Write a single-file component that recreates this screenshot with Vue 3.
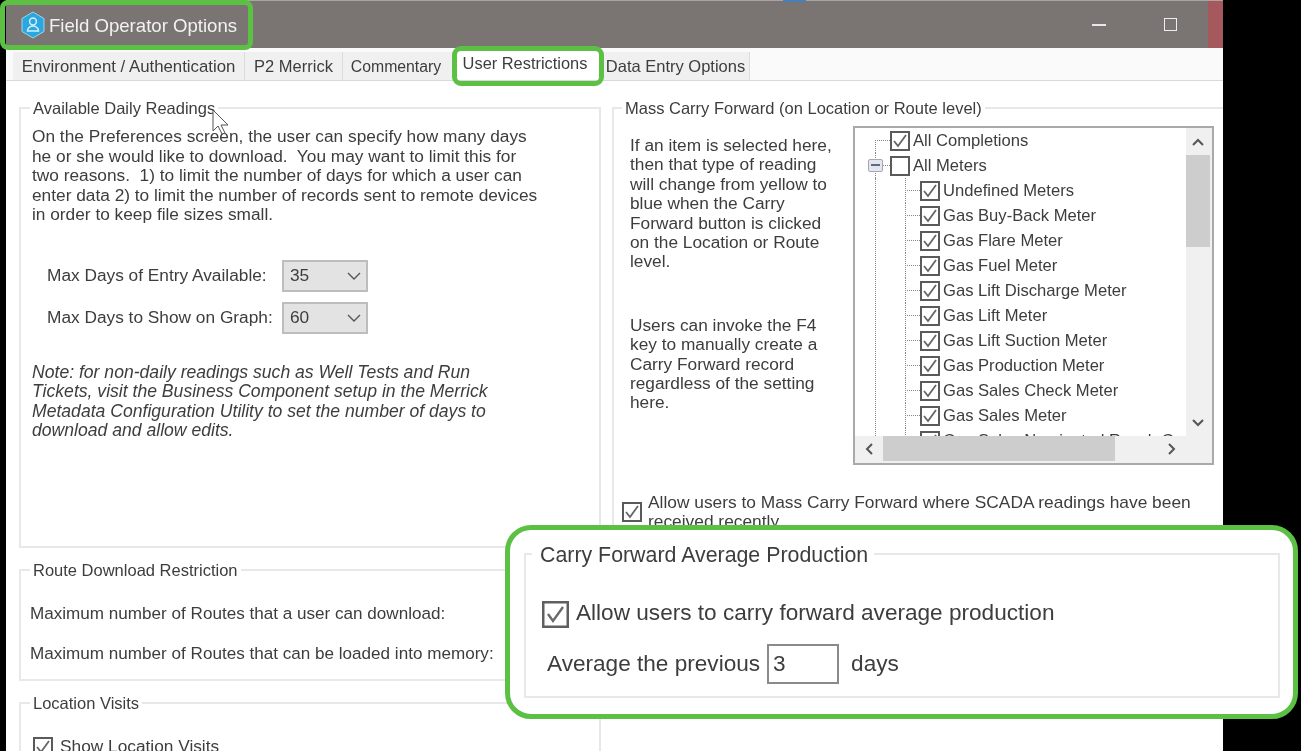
<script setup>
const meters = ['Undefined Meters','Gas Buy-Back Meter','Gas Flare Meter','Gas Fuel Meter','Gas Lift Discharge Meter','Gas Lift Meter','Gas Lift Suction Meter','Gas Production Meter','Gas Sales Check Meter','Gas Sales Meter','Gas Sales Nominated Ranch Gas']
</script>

<template>
  <div class="page">
    <div class="window">
      <header class="titlebar">
        <svg class="appicon" width="26" height="28" viewBox="0 0 26 28">
          <path d="M13 1 L24 7.5 V20.5 L13 27 L2 20.5 V7.5 Z" fill="#2aa7df" stroke="#9fd4ec" stroke-width="1"/>
          <circle cx="13" cy="10.5" r="3.4" fill="none" stroke="#d5eefa" stroke-width="1.5"/>
          <path d="M7.5 20 a5.5 5 0 0 1 11 0 Z" fill="none" stroke="#d5eefa" stroke-width="1.5"/>
        </svg>
        <span class="title">Field Operator Options</span>
        <span class="spacer"></span>
        <span class="minimize"></span>
        <span class="maximize"></span>
        <span class="close"></span>
      </header>

      <nav class="tabs">
        <span class="tab t1">Environment / Authentication</span>
        <span class="tab t2">P2 Merrick</span>
        <span class="tab t3">Commentary</span>
        <span class="tab active">User Restrictions</span>
        <span class="tab t5">Data Entry Options</span>
      </nav>

      <main class="content">
        <div class="col-left">
          <section class="group readings">
            <div class="legend">Available Daily Readings</div>
            <p class="intro">On the Preferences screen, the user can specify how many days<br>he or she would like to download.&nbsp; You may want to limit this for<br>two reasons.&nbsp; 1) to limit the number of days for which a user can<br>enter data 2) to limit the number of records sent to remote devices<br>in order to keep file sizes small.</p>
            <div class="field first"><span class="flabel">Max Days of Entry Available:</span><span class="select">35<svg width="14" height="8" viewBox="0 0 14 8"><path d="M1 1 L7 7 L13 1" fill="none" stroke="#555" stroke-width="1.4"/></svg></span></div>
            <div class="field"><span class="flabel">Max Days to Show on Graph:</span><span class="select">60<svg width="14" height="8" viewBox="0 0 14 8"><path d="M1 1 L7 7 L13 1" fill="none" stroke="#555" stroke-width="1.4"/></svg></span></div>
            <p class="note">Note: for non-daily readings such as Well Tests and Run<br>Tickets, visit the Business Component setup in the Merrick<br>Metadata Configuration Utility to set the number of days to<br>download and allow edits.</p>
          </section>

          <section class="group routes">
            <div class="legend">Route Download Restriction</div>
            <div class="route-line r1">Maximum number of Routes that a user can download:</div>
            <div class="route-line r2">Maximum number of Routes that can be loaded into memory:</div>
          </section>

          <section class="group visits">
            <div class="legend">Location Visits</div>
            <label class="visit-row">
              <svg class="cb" width="20" height="20" viewBox="0 0 20 20"><rect x="1" y="1" width="18" height="18" fill="#fff" stroke="#5a5a5a" stroke-width="2"/><path d="M4 10 L8 15 L16 4" fill="none" stroke="#666" stroke-width="1.8"/></svg>
              <span>Show Location Visits</span>
            </label>
          </section>
        </div>

        <div class="col-right">
          <section class="group mass">
            <div class="legend">Mass Carry Forward (on Location or Route level)</div>
            <div class="mass-body">
              <div class="help">
                <p>If an item is selected here,<br>then that type of reading<br>will change from yellow to<br>blue when the Carry<br>Forward button is clicked<br>on the Location or Route<br>level.</p>
                <p class="help2">Users can invoke the F4<br>key to manually create a<br>Carry Forward record<br>regardless of the setting<br>here.</p>
              </div>
              <div class="treebox">
                <div class="treeview">
                  <div class="row lvl0 first-row">
                    <svg class="cb" width="20" height="20" viewBox="0 0 20 20"><rect x="1" y="1" width="18" height="18" fill="#fff" stroke="#5a5a5a" stroke-width="2"/><path d="M4 10 L8 15 L16 4" fill="none" stroke="#666" stroke-width="1.8"/></svg>
                    <span>All Completions</span>
                  </div>
                  <div class="row lvl0 parent">
                    <span class="expander"></span>
                    <svg class="cb" width="20" height="20" viewBox="0 0 20 20"><rect x="1" y="1" width="18" height="18" fill="#fff" stroke="#5a5a5a" stroke-width="2"/></svg>
                    <span>All Meters</span>
                  </div>
                  <div class="row lvl1" v-for="m in meters" :key="m">
                    <svg class="cb" width="20" height="20" viewBox="0 0 20 20"><rect x="1" y="1" width="18" height="18" fill="#fff" stroke="#5a5a5a" stroke-width="2"/><path d="M4 10 L8 15 L16 4" fill="none" stroke="#666" stroke-width="1.8"/></svg>
                    <span>{{ m }}</span>
                  </div>
                </div>
                <div class="vscroll">
                  <svg width="12" height="8" viewBox="0 0 12 8"><path d="M1 7 L6 2 L11 7" fill="none" stroke="#555" stroke-width="2"/></svg>
                  <span class="vthumb"></span>
                  <span class="spacer"></span>
                  <svg width="12" height="8" viewBox="0 0 12 8"><path d="M1 1 L6 6 L11 1" fill="none" stroke="#555" stroke-width="2"/></svg>
                </div>
                <div class="hscroll">
                  <svg width="8" height="12" viewBox="0 0 8 12"><path d="M7 1 L2 6 L7 11" fill="none" stroke="#555" stroke-width="2"/></svg>
                  <span class="hthumb"></span>
                  <span class="spacer"></span>
                  <svg width="8" height="12" viewBox="0 0 8 12"><path d="M1 1 L6 6 L1 11" fill="none" stroke="#555" stroke-width="2"/></svg>
                </div>
              </div>
            </div>
            <div class="scada">
              <svg class="cb" width="20" height="20" viewBox="0 0 20 20"><rect x="1" y="1" width="18" height="18" fill="#fff" stroke="#5a5a5a" stroke-width="2"/><path d="M4 10 L8 15 L16 4" fill="none" stroke="#666" stroke-width="1.8"/></svg>
              <span>Allow users to Mass Carry Forward where SCADA readings have been<br>received recently</span>
            </div>
          </section>
        </div>
      </main>
    </div>

    <div class="callout title-callout"></div>
    <div class="callout tab-callout"></div>

    <div class="callout avg">
      <section class="avg-group">
        <div class="legend avg-legend">Carry Forward Average Production</div>
        <div class="avg-check">
          <svg width="27" height="27" viewBox="0 0 27 27"><rect x="1.25" y="1.25" width="24.5" height="24.5" fill="#fff" stroke="#5f5f5f" stroke-width="2.5"/><path d="M6 13 L11 20 L21 6" fill="none" stroke="#6a6a6a" stroke-width="2.4"/></svg>
          <span class="avg-check-text">Allow users to carry forward average production</span>
        </div>
        <div class="avg-days">
          <span>Average the previous</span>
          <span class="numbox">3</span>
          <span class="days">days</span>
        </div>
      </section>
    </div>

    <svg class="cursor" width="20" height="26" viewBox="0 0 20 26"><path d="M1 1 V22 L6 17 L10 25 L13 24 L9 16 L16 16 Z" fill="#fff" stroke="#555" stroke-width="1"/></svg>
    <span class="topmark"></span>
  </div>
</template>

<style>
html, body { margin: 0; background: #000; }
</style>

<style scoped>
.page {
  position: relative;
  width: 1301px;
  height: 751px;
  overflow: hidden;
  background: #000;
  font-family: "Liberation Sans", Arial, sans-serif;
  font-size: 17.3px;
  color: #3d3d3d;
}
.page > * { filter: blur(0.5px); }
.window {
  width: 1217px;
  height: 751px;
  margin-left: 6px;
  background: #fff;
  overflow: hidden;
}
.titlebar {
  height: 48px;
  box-sizing: border-box;
  border-top: 1px solid #a9a4a3;
  background: #7a7473;
  display: flex;
  align-items: center;
  color: #f2f2f2;
}
.appicon { margin-left: 14px; }
.title { margin-left: 3px; font-size: 18.6px; margin-top: 2px; }
.spacer { flex: 1; }
.minimize { width: 14px; height: 2px; background: #e8e8e8; margin-right: 58px; margin-top: 1px; }
.maximize { width: 11px; height: 11px; border: 1.5px solid #eee; margin-right: 31px; }
.close { width: 15px; height: 47px; background: #a5595c; }
.tabs {
  height: 33px;
  box-sizing: border-box;
  background: #fafafa;
  border-bottom: 1px solid #d9d9d9;
  display: flex;
  align-items: stretch;
  padding: 4px 0 0 7px;
}
.tab {
  box-sizing: border-box;
  display: flex;
  align-items: center;
  justify-content: center;
  border-right: 1px solid #dcdcdc;
  background: #f0f0f0;
  white-space: nowrap;
  font-size: 16.5px;
  padding-top: 1px;
}
.t1 { width: 232px; font-size: 16.8px; }
.t2 { width: 98px; }
.t3 { width: 113px; padding-right: 6px; font-size: 15.8px; }
.active {
  width: 144px;
  background: #fff;
  border-right: 0;
  margin-top: -4px;
  padding: 0 6px 1px 0;
  font-size: 16.4px;
}
.t5 { width: 150px; padding-left: 2px; }
.content {
  display: grid;
  grid-template-columns: 582px 640px;
  column-gap: 11px;
  padding: 26px 0 0 13px;
}
.group {
  border: 2px solid #e8e8e8;
  box-sizing: border-box;
  position: relative;
}
.legend {
  width: fit-content;
  background: #fff;
  margin: -11px 0 0 9px;
  padding: 0 3px 0 3px;
  line-height: 20px;
  font-size: 16.5px;
  white-space: nowrap;
}
.mass > .legend { margin-left: 8px; }
.readings { height: 441px; }
.intro { margin: 9px 0 0 11px; line-height: 19.5px; white-space: nowrap; }
.field { display: flex; align-items: center; margin: 10px 0 0 26px; height: 32px; }
.field.first { margin-top: 35px; }
.flabel { width: 235px; white-space: nowrap; }
.select {
  width: 86px;
  height: 32px;
  box-sizing: border-box;
  border: 2px solid #bdbdbd;
  background: #e3e3e3;
  display: flex;
  align-items: center;
  justify-content: space-between;
  padding: 0 5px 0 6px;
}
.note { margin: 29px 0 0 11px; font-style: italic; line-height: 19.5px; white-space: nowrap; font-size: 17.6px; }
.routes { height: 112px; margin-top: 21px; }
.route-line { margin-left: 9px; white-space: nowrap; font-size: 17.1px; }
.r1 { margin-top: 24px; }
.r2 { margin-top: 20px; }
.visits { height: 100px; margin-top: 21px; }
.visit-row { display: flex; align-items: center; gap: 7px; margin: 23px 0 0 12px; }
.mass { height: 500px; }
.mass-body { display: flex; margin-top: 8px; }
.help { margin: 10px 0 0 16px; width: 223px; line-height: 19.4px; white-space: nowrap; flex: none; }
.help p { margin: 0; }
.help .help2 { margin-top: 44px; }
.treebox {
  width: 361px;
  height: 339px;
  flex: none;
  box-sizing: border-box;
  border: 2px solid #a9a9a9;
  display: grid;
  grid-template-columns: 331px 24px;
  grid-template-rows: 308px 25px;
  background: #f0f0f0;
}
.treeview { background: #fff; overflow: hidden; position: relative; font-size: 16.6px; }
.treeview::after {
  content: "";
  position: absolute;
  left: 20px;
  top: 50px;
  bottom: 0;
  border-left: 1px dotted #888;
}
.row { height: 25px; display: flex; align-items: center; gap: 3px; position: relative; white-space: nowrap; }
.lvl0 { padding-left: 35px; }
.lvl1 { padding-left: 65px; }
.cb { flex: none; }
.row::before {
  content: "";
  position: absolute;
  top: 12px;
  height: 0;
  border-top: 1px dotted #888;
}
.lvl0::before { left: 20px; width: 15px; }
.lvl1::before { left: 50px; width: 15px; }
.row::after {
  content: "";
  position: absolute;
  top: 0;
  height: 25px;
  border-left: 1px dotted #888;
}
.lvl1::after { left: 50px; }
.first-row::after { left: 20px; top: 12px; height: 13px; }
.parent::after { left: 20px; height: 25px; }
.expander {
  position: absolute;
  left: 13px;
  top: 6px;
  width: 15px;
  height: 13px;
  box-sizing: border-box;
  border: 1.5px solid #a5a8b5;
  border-radius: 2px;
  background: #e4e6ee;
  z-index: 1;
}
.expander::after {
  content: "";
  position: absolute;
  left: 2px;
  right: 2px;
  top: 4px;
  height: 2px;
  background: #5a6a8a;
}
.vscroll { display: flex; flex-direction: column; align-items: center; padding: 10px 0 9px; }
.vthumb { width: 100%; height: 92px; background: #cdcdcd; margin-top: 9px; }
.hscroll { display: flex; align-items: center; padding: 0 10px; grid-column: 1 / 2; }
.hthumb { width: 232px; height: 100%; background: #cdcdcd; margin-left: 10px; }
.scada { display: flex; gap: 6px; margin: 28px 0 0 8px; line-height: 19px; white-space: nowrap; font-size: 17.35px; }
.scada .cb { margin-top: 9px; }

.callout {
  position: absolute;
  box-sizing: border-box;
  border: 5px solid #5cc045;
}
.title-callout { left: 0; top: 0; width: 253px; height: 50px; border-radius: 8px; }
.tab-callout { left: 452px; top: 46px; width: 152px; height: 40px; border-radius: 9px; }
.avg {
  left: 505px;
  top: 525px;
  width: 793px;
  height: 194px;
  border-radius: 26px;
  background: #fff;
  padding: 23px 13px 0 14px;
}
.avg-group {
  border: 2px solid #e8e8e8;
  height: 145px;
  box-sizing: border-box;
  font-size: 22.6px;
}
.avg-legend { font-size: 21.35px; line-height: 26px; margin: -13px 0 0 6px; padding: 0 6px 0 8px; }
.avg-check { display: flex; align-items: center; gap: 7px; margin: 32px 0 0 16px; }
.avg-check-text { margin-bottom: 2px; }
.avg-days { display: flex; align-items: center; margin: 16px 0 0 21px; }
.numbox {
  width: 72px;
  height: 40px;
  box-sizing: border-box;
  border: 2px solid #8a8a8a;
  margin-left: 7px;
  padding-left: 4px;
  line-height: 36px;
}
.days { margin-left: 12px; }
.cursor { position: absolute; left: 212px; top: 109px; }
.topmark { position: absolute; left: 783px; top: 0; width: 23px; height: 2px; background: #4a7fb5; }
</style>
